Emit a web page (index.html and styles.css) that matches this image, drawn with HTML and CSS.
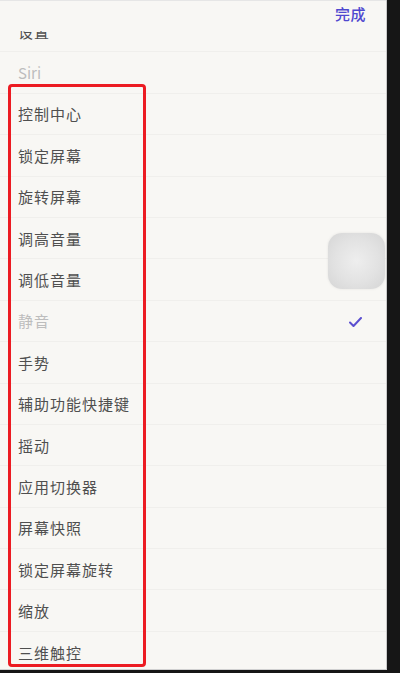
FILE: index.html
```html
<!DOCTYPE html>
<html lang="zh-CN">
<head>
  <meta charset="UTF-8">
  <title>自定顶层菜单</title>
  <link rel="stylesheet" href="styles.css">
</head>
<body>
  <div class="screen">
    <div class="topbar">
      <span class="done">完成</span>
    </div>

    <ul class="action-list">
      <li class="row first">设置</li>
      <li class="row muted latin">Siri</li>
      <li class="row">控制中心</li>
      <li class="row">锁定屏幕</li>
      <li class="row">旋转屏幕</li>
      <li class="row">调高音量</li>
      <li class="row">调低音量</li>
      <li class="row muted">静音
        <svg class="check" width="13" height="10" viewBox="0 0 13 10">
          <polyline points="1,5.5 4.5,9 12,1" fill="none" stroke="#5b4fd0" stroke-width="2" stroke-linecap="round" stroke-linejoin="round"/>
        </svg>
      </li>
      <li class="row">手势</li>
      <li class="row">辅助功能快捷键</li>
      <li class="row">摇动</li>
      <li class="row">应用切换器</li>
      <li class="row">屏幕快照</li>
      <li class="row">锁定屏幕旋转</li>
      <li class="row">缩放</li>
      <li class="row">三维触控</li>
    </ul>

    <!-- 辅助触控悬浮按钮 -->
    <div class="assistive"></div>
    <!-- 标注框 -->
    <div class="mark"></div>
  </div>
</body>
</html>
```

FILE: styles.css
```css
:root {
  --bg: #f8f7f4;
  --text: #4f4f4f;
  --muted: #bdbdbd;
  --tint: #4f48cf;
  --line: #f0efec;
  --row-h: 41.4px;
}

* {
  margin: 0;
  padding: 0;
  box-sizing: border-box;
}

body {
  background: #161616;
  font-family: "Noto Sans CJK SC", "Noto Sans", sans-serif;
  width: 400px;
  height: 673px;
  overflow: hidden;
}

.screen {
  position: relative;
  width: 387px;
  height: 670px;
  background: var(--bg);
  border-right: 1px solid #c9c9c9;
  border-bottom: 1px solid #d0d0d0;
  display: flex;
  flex-direction: column;
  overflow: hidden;
}

.topbar {
  height: 31px;
  display: flex;
  justify-content: flex-end;
  align-items: flex-start;
  padding: 3px 20px 0 0;
  background: var(--bg);
  border-top: 1px solid #e6e6e6;
}

.done {
  color: var(--tint);
  font-size: 15px;
  font-weight: 500;
  letter-spacing: 0.5px;
  line-height: 20px;
}

.action-list {
  list-style: none;
  flex: 1;
  overflow: hidden;
}

.row {
  height: var(--row-h);
  display: flex;
  align-items: center;
  justify-content: space-between;
  padding: 0 24px 0 18px;
  font-size: 15px;
  letter-spacing: 1px;
  color: var(--text);
  border-bottom: 1px solid var(--line);
}

.row.first {
  margin-top: -20px;
}

.row.muted {
  color: var(--muted);
}

.row.latin {
  letter-spacing: 0;
}

.check {
  margin-top: 2px;
}

.assistive {
  position: absolute;
  left: 328px;
  top: 233px;
  width: 57px;
  height: 56px;
  border-radius: 14px;
  background: radial-gradient(circle at 50% 50%, #eeeeee 0%, #e2e2e2 55%, #d5d5d5 100%);
  box-shadow: 0 0 3px rgba(0, 0, 0, 0.08);
}

.mark {
  position: absolute;
  left: 8px;
  top: 84px;
  width: 138px;
  height: 583px;
  border: 3px solid #ec1b22;
  border-radius: 4px;
}
```
